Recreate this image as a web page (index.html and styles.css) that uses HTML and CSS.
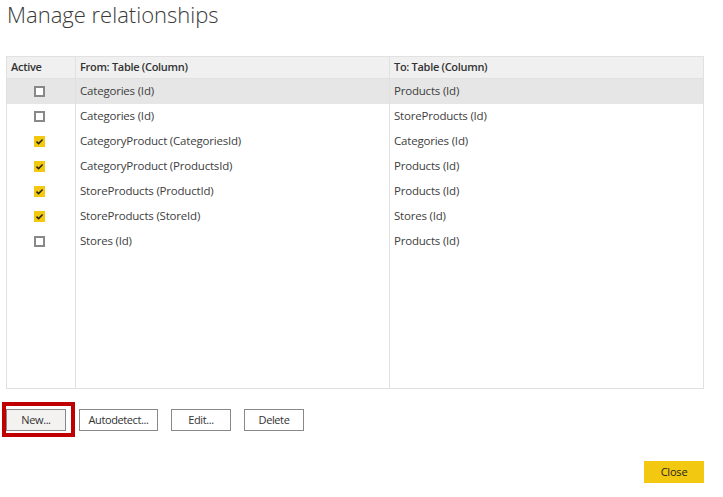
FILE: index.html
```html
<!DOCTYPE html>
<html>
<head>
<meta charset="utf-8">
<link rel="stylesheet" href="styles.css">
</head>
<body>
<div class="dialog">
  <h1 class="title">Manage relationships</h1>
  <table class="grid">
    <thead>
      <tr>
        <th class="c-active">Active</th>
        <th class="c-from">From: Table (Column)</th>
        <th class="c-to">To: Table (Column)</th>
      </tr>
    </thead>
    <tbody>
      <tr class="selected">
        <td class="c-active"><span class="cb"></span></td>
        <td>Categories (Id)</td>
        <td>Products (Id)</td>
      </tr>
      <tr>
        <td class="c-active"><span class="cb"></span></td>
        <td>Categories (Id)</td>
        <td>StoreProducts (Id)</td>
      </tr>
      <tr>
        <td class="c-active"><span class="cb checked"><svg viewBox="0 0 11 11" width="11" height="11"><path d="M2.5 5.6 L4.6 7.6 L8.6 3.5" fill="none" stroke="#252423" stroke-width="1.5"/></svg></span></td>
        <td>CategoryProduct (CategoriesId)</td>
        <td>Categories (Id)</td>
      </tr>
      <tr>
        <td class="c-active"><span class="cb checked"><svg viewBox="0 0 11 11" width="11" height="11"><path d="M2.5 5.6 L4.6 7.6 L8.6 3.5" fill="none" stroke="#252423" stroke-width="1.5"/></svg></span></td>
        <td>CategoryProduct (ProductsId)</td>
        <td>Products (Id)</td>
      </tr>
      <tr>
        <td class="c-active"><span class="cb checked"><svg viewBox="0 0 11 11" width="11" height="11"><path d="M2.5 5.6 L4.6 7.6 L8.6 3.5" fill="none" stroke="#252423" stroke-width="1.5"/></svg></span></td>
        <td>StoreProducts (ProductId)</td>
        <td>Products (Id)</td>
      </tr>
      <tr>
        <td class="c-active"><span class="cb checked"><svg viewBox="0 0 11 11" width="11" height="11"><path d="M2.5 5.6 L4.6 7.6 L8.6 3.5" fill="none" stroke="#252423" stroke-width="1.5"/></svg></span></td>
        <td>StoreProducts (StoreId)</td>
        <td>Stores (Id)</td>
      </tr>
      <tr>
        <td class="c-active"><span class="cb"></span></td>
        <td>Stores (Id)</td>
        <td>Products (Id)</td>
      </tr>
      <tr class="filler">
        <td></td><td></td><td></td>
      </tr>
    </tbody>
  </table>
  <div class="actions">
    <button class="btn btn-new">New...<span class="highlight"></span></button>
    <button class="btn btn-auto">Autodetect...</button>
    <button class="btn btn-edit">Edit...</button>
    <button class="btn btn-delete">Delete</button>
  </div>
  <div class="footer">
    <button class="btn-close">Close</button>
  </div>
</div>
</body>
</html>
```

FILE: styles.css
```css
html, body {
  margin: 0;
  padding: 0;
  background: #ffffff;
}

body {
  font-family: "Segoe UI", "Open Sans", "Noto Sans", sans-serif;
  color: #333333;
  width: 723px;
  height: 497px;
  overflow: hidden;
}

.dialog {
  padding: 0 19px 0 6px;
}

.title {
  margin: 0;
  padding-left: 1px;
  height: 56px;
  font-size: 22px;
  font-weight: 300;
  line-height: 28px;
  color: #3a3a3a;
}

.grid {
  width: 698px;
  height: 333px;
  border-collapse: collapse;
  border: 1px solid #e1e1e1;
  table-layout: fixed;
  font-size: 11.5px;
  letter-spacing: -0.2px;
}

.grid th,
.grid td {
  padding: 0 0 2px 4px;
  text-align: left;
  border-left: 1px solid #e1e1e1;
  white-space: nowrap;
  overflow: hidden;
}

.grid th {
  height: 19px;
  background: #f0f0f0;
  font-size: 11px;
  font-weight: 600;
  letter-spacing: -0.3px;
  color: #333333;
  border-bottom: 1px solid #e1e1e1;
}

.grid td {
  height: 23px;
  color: #404040;
}

.grid .c-active {
  width: 64px;
}

.grid .c-from {
  width: 309px;
}

.grid td.c-active {
  padding: 0 0 0 27px;
}

.grid tr.selected td {
  background: #e6e6e6;
}

.grid tr.filler td {
  height: auto;
}

.cb {
  display: block;
  box-sizing: border-box;
  width: 11px;
  height: 11px;
  border: 2px solid #8a8886;
  background: #ffffff;
}

.cb.checked {
  border: none;
  background: #f2c811;
}

.cb svg {
  display: block;
}

.actions {
  display: flex;
  gap: 13px;
  margin-top: 20px;
  height: 22px;
}

.btn {
  position: relative;
  box-sizing: border-box;
  height: 22px;
  padding: 0 0 1px 0;
  border: 1px solid #8a8886;
  background: #ffffff;
  font-family: inherit;
  font-size: 11px;
  letter-spacing: -0.4px;
  color: #333333;
  cursor: pointer;
}

.btn-new {
  width: 60px;
  background: #f3f2f1;
}

.btn-auto {
  width: 79px;
}

.btn-edit {
  width: 60px;
}

.btn-delete {
  width: 60px;
}

.highlight {
  position: absolute;
  left: -5px;
  top: -8px;
  width: 65px;
  height: 27px;
  border: 4px solid #c00000;
  pointer-events: none;
}

.footer {
  display: flex;
  justify-content: flex-end;
  margin-top: 30px;
  width: 698px;
}

.btn-close {
  width: 60px;
  height: 22px;
  padding: 0 0 1px 0;
  border: none;
  background: #f2c811;
  font-family: inherit;
  font-size: 11px;
  letter-spacing: -0.2px;
  color: #252423;
}
```
